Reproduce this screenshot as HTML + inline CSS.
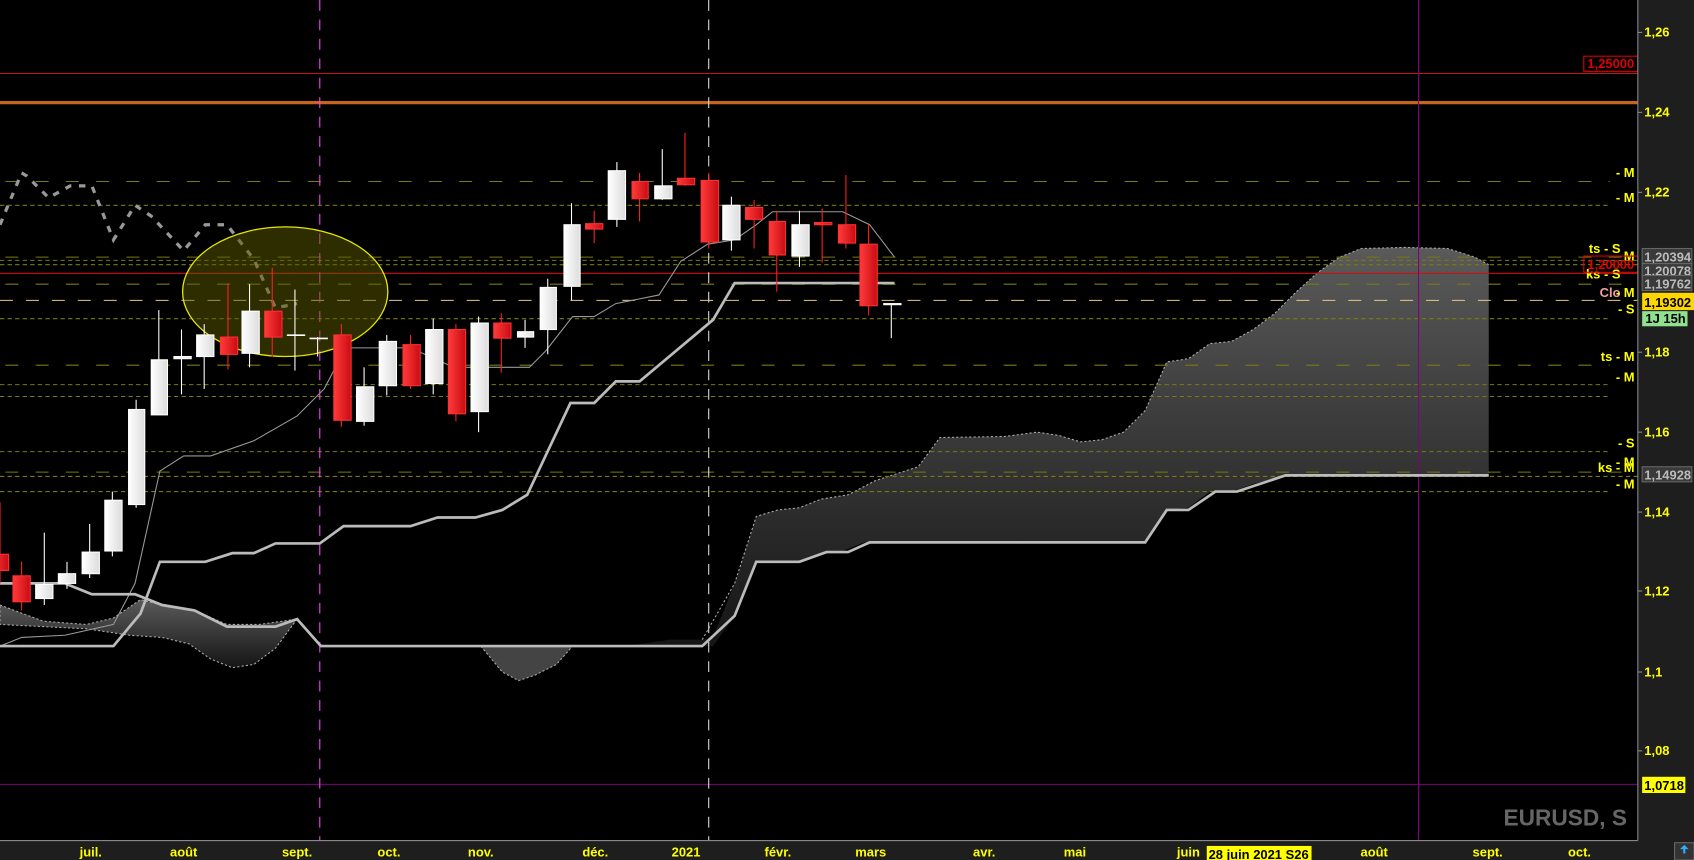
<!DOCTYPE html>
<html><head><meta charset="utf-8"><style>
html,body{margin:0;padding:0;background:#000;overflow:hidden}
svg{display:block}
text{font-family:"Liberation Sans",sans-serif;font-weight:bold}
</style></head><body>
<svg width="1694" height="860" viewBox="0 0 1568 796" xmlns="http://www.w3.org/2000/svg">
<defs>
<linearGradient id="cl" x1="0" y1="0" x2="0" y2="1"><stop offset="0" stop-color="#5a5a5a"/><stop offset="1" stop-color="#151515"/></linearGradient>
<linearGradient id="rd" x1="0" y1="0" x2="1" y2="0"><stop offset="0" stop-color="#ff3b3b"/><stop offset="1" stop-color="#c80c12"/></linearGradient>
<linearGradient id="wh" x1="0" y1="0" x2="1" y2="0"><stop offset="0" stop-color="#fff"/><stop offset="1" stop-color="#dcdcdc"/></linearGradient>
</defs>
<rect width="1568" height="796" fill="#000"/>
<!-- clouds -->
<path d="M0,560 L40,575 L80,578 L105,572 L130,555 L150,560 L180,565 L210,578 L240,578 L275,573 L255,600 L235,615 L215,618 L195,610 L175,596 L150,590 L120,588 L80,582 L40,580 L0,578Z" fill="url(#cl)" stroke="#aaa" stroke-width="1" stroke-dasharray="2,2"/>
<path d="M445,598 L530,598 L515,615 L495,625 L480,630 L465,622Z" fill="#444" stroke="#aaa" stroke-dasharray="2,2"/>
<path d="M660,590 L680,540 L700,478 L720,472 L740,470 L760,462 L785,458 L810,445 L850,432 L870,405 L930,404 L960,400 L980,403 L1000,409 L1020,407 L1040,400 L1060,380 L1080,335 L1100,332 L1120,318 L1140,316 L1160,305 L1180,290 L1200,270 L1220,252 L1240,238 L1260,230 L1300,229 L1340,230 L1365,238 L1378,245 L1378,440 L1190,440 L1160,448 L1140,455 L1120,455 L1100,470 L1080,472 L1060,502 L800,502 L780,510 L760,512 L740,520 L700,520 L680,570 L660,598 L580,598 L620,592 L650,592Z" fill="url(#cl)"/>
<path d="M650,592 L680,540 L700,478 L720,472 L740,470 L760,462 L785,458 L810,445 L850,432 L870,405 L930,404 L960,400 L980,403 L1000,409 L1020,407 L1040,400 L1060,380 L1080,335 L1100,332 L1120,318 L1140,316 L1160,305 L1180,290 L1200,270 L1220,252 L1240,238 L1260,230 L1300,229 L1340,230 L1365,238 L1378,245" fill="none" stroke="#aaa" stroke-dasharray="2,2"/>
<!-- horizontal levels -->
<g stroke-width="1" fill="none">
<line x1="0" y1="68" x2="1516" y2="68" stroke="#d01010"/>
<line x1="0" y1="95" x2="1516" y2="95" stroke="#c8641e" stroke-width="3"/>
<line x1="5" y1="168" x2="1490" y2="168" stroke="#7a7a10" stroke-dasharray="12,16"/>
<line x1="0" y1="190" x2="1490" y2="190" stroke="#7a7a10" stroke-dasharray="4,3"/>
<line x1="5" y1="238" x2="1516" y2="238" stroke="#7a7a10" stroke-dasharray="12,16"/>
<line x1="0" y1="241" x2="1516" y2="241" stroke="#7a7a10" stroke-dasharray="4,3"/>
<line x1="0" y1="245" x2="1516" y2="245" stroke="#7a7a10" stroke-dasharray="4,3"/>
<line x1="0" y1="253" x2="1516" y2="253" stroke="#d01010"/>
<line x1="5" y1="263" x2="1516" y2="263" stroke="#7a7a10" stroke-dasharray="12,16"/>
<line x1="0" y1="278" x2="1516" y2="278" stroke="#e8c880" stroke-dasharray="12,12"/>
<line x1="0" y1="295" x2="1490" y2="295" stroke="#7a7a10" stroke-dasharray="4,3"/>
<line x1="5" y1="338" x2="1490" y2="338" stroke="#7a7a10" stroke-dasharray="12,16"/>
<line x1="0" y1="356" x2="1490" y2="356" stroke="#7a7a10" stroke-dasharray="4,3"/>
<line x1="0" y1="367" x2="1490" y2="367" stroke="#7a7a10" stroke-dasharray="4,3"/>
<line x1="0" y1="418" x2="1490" y2="418" stroke="#7a7a10" stroke-dasharray="4,3"/>
<line x1="5" y1="437" x2="1516" y2="437" stroke="#7a7a10" stroke-dasharray="12,16"/>
<line x1="0" y1="441" x2="1516" y2="441" stroke="#7a7a10" stroke-dasharray="4,3"/>
<line x1="0" y1="455" x2="1490" y2="455" stroke="#7a7a10" stroke-dasharray="4,3"/>
<line x1="0" y1="726" x2="1516" y2="726" stroke="#800080"/>
<line x1="1313" y1="0" x2="1313" y2="778" stroke="#800080"/>
<line x1="296" y1="0" x2="296" y2="778" stroke="#ff40ff" stroke-dasharray="10,8"/>
<line x1="656" y1="0" x2="656" y2="778" stroke="#ddd" stroke-dasharray="10,8"/>
</g>
<!-- chikou dashed -->
<polyline points="0,208 20,160 25,163 45,183 65,172 85,172 105,222 125,190 140,200 170,232 190,208 210,208 235,240 255,285 275,281" fill="none" stroke="#999" stroke-width="3" stroke-dasharray="6,7"/>
<!-- ellipse -->
<ellipse cx="264" cy="270" rx="95" ry="60" fill="#5a5a00" fill-opacity="0.5" stroke="#e6e600" stroke-width="1.2"/>
<!-- tenkan thin -->
<polyline points="0,598 20,590 60,588 105,578 125,540 148,436 170,422 195,422 235,408 275,385 300,360 320,322 380,322 420,340 490,340 505,325 530,293 550,293 570,281 610,273 630,242 655,226 680,222 700,208 715,196 780,196 805,208 828,238" fill="none" stroke="#999" stroke-width="1"/>
<!-- kijun thick -->
<polyline points="0,540 40,540 60,540 85,550 125,550 150,560 180,565 210,580 255,580 275,573 297,598 650,598 680,570 700,520 740,520 765,511 785,511 805,502 1060,502 1080,472 1100,472 1125,455 1145,455 1190,440 1378,440" fill="none" stroke="#bbb" stroke-width="2.5"/>
<polyline points="0,598 105,598 130,568 148,520 190,520 215,512 235,512 255,503 296,503 318,487 380,487 405,479 440,479 465,472 488,458 528,373 550,373 570,353 592,353 660,296 680,262 828,262" fill="none" stroke="#bbb" stroke-width="2.5"/>
<!-- candles -->
<g stroke-width="1">
<g stroke="#ff2020"><line x1="0" y1="465" x2="0" y2="540"/><line x1="20" y1="520" x2="20" y2="565"/><line x1="211" y1="262" x2="211" y2="342"/><line x1="252" y1="248" x2="252" y2="330"/><line x1="316" y1="300" x2="316" y2="395"/><line x1="380" y1="310" x2="380" y2="360"/><line x1="422" y1="300" x2="422" y2="390"/><line x1="464" y1="290" x2="464" y2="345"/><line x1="550" y1="195" x2="550" y2="225"/><line x1="592" y1="160" x2="592" y2="205"/><line x1="634" y1="123" x2="634" y2="172"/><line x1="656" y1="160" x2="656" y2="230"/><line x1="698" y1="185" x2="698" y2="230"/><line x1="719" y1="195" x2="719" y2="270"/><line x1="761" y1="193" x2="761" y2="243"/><line x1="783" y1="162" x2="783" y2="230"/><line x1="804" y1="208" x2="804" y2="292"/></g>
<g stroke="#fff"><line x1="41" y1="493" x2="41" y2="560"/><line x1="62" y1="520" x2="62" y2="545"/><line x1="83" y1="485" x2="83" y2="535"/><line x1="104" y1="455" x2="104" y2="515"/><line x1="126" y1="370" x2="126" y2="470"/><line x1="147" y1="287" x2="147" y2="384"/><line x1="168" y1="305" x2="168" y2="365"/><line x1="189" y1="300" x2="189" y2="360"/><line x1="231" y1="263" x2="231" y2="340"/><line x1="273" y1="268" x2="273" y2="343"/><line x1="294" y1="312" x2="294" y2="330"/><line x1="337" y1="340" x2="337" y2="394"/><line x1="358" y1="310" x2="358" y2="366"/><line x1="401" y1="295" x2="401" y2="365"/><line x1="443" y1="293" x2="443" y2="400"/><line x1="486" y1="296" x2="486" y2="322"/><line x1="507" y1="258" x2="507" y2="328"/><line x1="529" y1="188" x2="529" y2="278"/><line x1="571" y1="150" x2="571" y2="210"/><line x1="613" y1="138" x2="613" y2="185"/><line x1="677" y1="182" x2="677" y2="232"/><line x1="740" y1="195" x2="740" y2="247"/><line x1="825" y1="281" x2="825" y2="313"/></g>
<g fill="url(#rd)" stroke="#ff3030">
<rect x="-8" y="513" width="16" height="15"/><rect x="12" y="533" width="16" height="24"/><rect x="204" y="312" width="16" height="16"/><rect x="245" y="288" width="16" height="24"/><rect x="309" y="310" width="16" height="79"/><rect x="373" y="319" width="16" height="38"/><rect x="415" y="305" width="16" height="78"/><rect x="457" y="299" width="16" height="14"/><rect x="542" y="207" width="16" height="5"/><rect x="585" y="168" width="15" height="16"/><rect x="627" y="165" width="16" height="6"/><rect x="649" y="167" width="16" height="57"/><rect x="690" y="192" width="16" height="11"/><rect x="712" y="205" width="15" height="31"/><rect x="754" y="206" width="16" height="2"/><rect x="776" y="208" width="16" height="17"/><rect x="796" y="226" width="16" height="57"/></g>
<g fill="url(#wh)" stroke="#fff">
<rect x="33" y="541" width="16" height="13"/><rect x="54" y="531" width="16" height="9"/><rect x="76" y="511" width="16" height="20"/><rect x="97" y="463" width="16" height="47"/><rect x="119" y="379" width="15" height="88"/><rect x="140" y="333" width="15" height="51"/><rect x="161" y="330" width="16" height="2"/><rect x="182" y="310" width="16" height="20"/><rect x="224" y="288" width="16" height="39"/><rect x="266" y="310" width="16" height="0.5"/><rect x="287" y="313" width="16" height="0.5"/><rect x="330" y="358" width="16" height="32"/><rect x="351" y="316" width="16" height="41"/><rect x="394" y="305" width="16" height="50"/><rect x="436" y="299" width="16" height="82"/><rect x="479" y="307" width="15" height="5"/><rect x="500" y="266" width="15" height="39"/><rect x="522" y="208" width="15" height="57"/><rect x="563" y="158" width="16" height="45"/><rect x="606" y="172" width="16" height="12"/><rect x="669" y="190" width="16" height="32"/><rect x="733" y="208" width="16" height="29"/><rect x="818" y="281" width="16" height="1"/></g>
</g>
<!-- right labels in chart -->
<g font-size="12" fill="#ffff00" text-anchor="end">
<text x="1513" y="164">- M</text><text x="1513" y="187">- M</text>
<text x="1500" y="234">ts - S</text><text x="1513" y="241">M</text>
<text x="1500" y="258">ks - S</text>
<text x="1500" y="275" fill="#f0a0a0">Clo</text><text x="1513" y="275">- M</text>
<text x="1513" y="290">- S</text><text x="1513" y="334">ts - M</text><text x="1513" y="353">- M</text>
<text x="1513" y="414">- S</text><text x="1513" y="432">- M</text><text x="1513" y="437">ks - M</text><text x="1513" y="452">- M</text>
</g>
<rect x="1466" y="237" width="50" height="15" fill="none" stroke="#e00000"/>
<text x="1491" y="249" font-size="12" fill="#e00000" text-anchor="middle">1,20000</text>
<rect x="1466" y="52" width="50" height="14" fill="none" stroke="#e00000"/>
<text x="1491" y="63" font-size="12" fill="#e00000" text-anchor="middle">1,25000</text>
<text x="1506" y="764" font-size="21" fill="#666" text-anchor="end">EURUSD, S</text>
<!-- axes -->
<rect x="1516" y="0" width="52" height="796" fill="#1e1e1e"/>
<line x1="1516" y1="0" x2="1516" y2="778" stroke="#888"/>
<rect x="0" y="778" width="1568" height="18" fill="#1e1e1e"/>
<line x1="0" y1="778" x2="1516" y2="778" stroke="#888"/>
<g font-size="12" fill="#ffff00">
<text x="1522" y="34">1,26</text><text x="1522" y="108">1,24</text><text x="1522" y="182">1,22</text><text x="1522" y="330">1,18</text><text x="1522" y="404">1,16</text><text x="1522" y="478">1,14</text><text x="1522" y="551">1,12</text><text x="1522" y="626">1,1</text><text x="1522" y="699">1,08</text>
</g>
<g stroke="#888"><line x1="1516" y1="30" x2="1520" y2="30"/><line x1="1516" y1="104" x2="1520" y2="104"/><line x1="1516" y1="178" x2="1520" y2="178"/><line x1="1516" y1="326" x2="1520" y2="326"/><line x1="1516" y1="400" x2="1520" y2="400"/><line x1="1516" y1="474" x2="1520" y2="474"/><line x1="1516" y1="547" x2="1520" y2="547"/><line x1="1516" y1="622" x2="1520" y2="622"/><line x1="1516" y1="695" x2="1520" y2="695"/></g>
<g font-size="12">
<rect x="1520" y="230" width="46" height="14" fill="#3a3a3a" stroke="#666"/><text x="1522" y="242" fill="#bbb">1,20394</text>
<rect x="1520" y="244" width="46" height="13" fill="#3a3a3a" stroke="#666"/><text x="1522" y="255" fill="#bbb">1,20078</text>
<rect x="1520" y="255" width="46" height="14" fill="#3a3a3a" stroke="#666"/><text x="1522" y="267" fill="#bbb">1,19762</text>
<rect x="1520" y="271" width="48" height="16" fill="#ffd700"/><text x="1522" y="284" fill="#000">1,19302</text>
<rect x="1520" y="288" width="42" height="14" fill="#90e090"/><text x="1523" y="299" fill="#000">1J 15h</text>
<rect x="1520" y="432" width="46" height="14" fill="#3a3a3a" stroke="#666"/><text x="1522" y="444" fill="#bbb">1,14928</text>
<rect x="1520" y="719" width="40" height="15" fill="#ffff00"/><text x="1522" y="731" fill="#000">1,0718</text>
</g>
<g font-size="12" fill="#ffff00" text-anchor="middle">
<text x="84" y="793">juil.</text><text x="170" y="793">août</text><text x="275" y="793">sept.</text><text x="360" y="793">oct.</text><text x="445" y="793">nov.</text><text x="551" y="793">déc.</text><text x="635" y="793">2021</text><text x="720" y="793">févr.</text><text x="806" y="793">mars</text><text x="911" y="793">avr.</text><text x="995" y="793">mai</text><text x="1100" y="793">juin</text><text x="1272" y="793">août</text><text x="1377" y="793">sept.</text><text x="1462" y="793">oct.</text>
</g>
<rect x="1117" y="783" width="97" height="13" fill="#ffff00"/>
<text x="1165" y="795" font-size="12" fill="#000" text-anchor="middle">28 juin 2021 S26</text>
<rect x="1550" y="780" width="18" height="16" fill="#333" stroke="#666"/>
<path d="M1559,782 l-4,4 h3 v4 h2 v-4 h3z" fill="#3af"/>
</svg>
</body></html>
